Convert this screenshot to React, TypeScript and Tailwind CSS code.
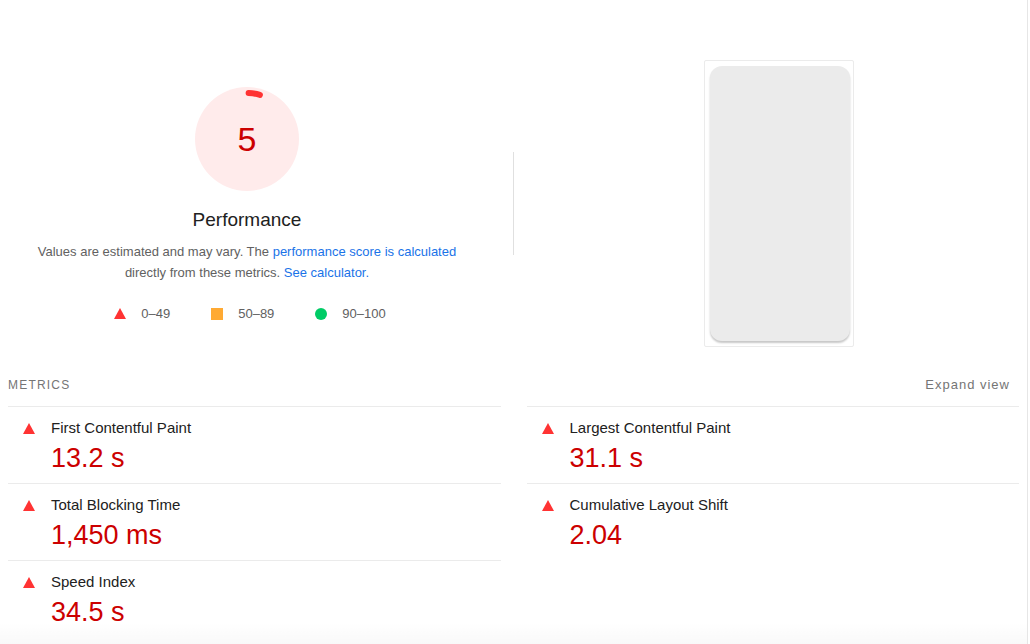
import React from "react";

const metrics = [
  [
    { title: "First Contentful Paint", value: "13.2 s" },
    { title: "Total Blocking Time", value: "1,450 ms" },
    { title: "Speed Index", value: "34.5 s" },
  ],
  [
    { title: "Largest Contentful Paint", value: "31.1 s" },
    { title: "Cumulative Layout Shift", value: "2.04" },
  ],
];

const FailIcon = ({ className = "" }: { className?: string }) => (
  <svg width="12" height="11" viewBox="0 0 12 11" className={className}>
    <polygon points="6,0 12,11 0,11" fill="#ff3333" />
  </svg>
);

const Gauge = () => (
  <div className="relative w-[104px] h-[104px]">
    <svg width="104" height="104" viewBox="0 0 104 104" className="absolute inset-0">
      <circle cx="52" cy="52" r="52" fill="#ffebeb" />
      <circle
        cx="52"
        cy="52"
        r="46"
        fill="none"
        stroke="#ff3333"
        strokeWidth="6"
        strokeLinecap="round"
        strokeDasharray="11.5 400"
        transform="rotate(-88 52 52)"
      />
    </svg>
    <div className="absolute inset-0 flex items-center justify-center text-[34px] text-[#cc0000] leading-none pt-[1px]">
      5
    </div>
  </div>
);

const MetricRow = ({ title, value }: { title: string; value: string }) => (
  <div className="border-t border-[#ebebeb] pt-[10px] pb-[9px] pl-[15px] flex">
    <div className="h-[22px] flex items-center">
      <FailIcon />
    </div>
    <div className="ml-[16px]">
      <div className="text-[15px] leading-[22px] text-[#212121]">{title}</div>
      <div className="mt-[3px] text-[27px] leading-[32px] text-[#cc0000]">{value}</div>
    </div>
  </div>
);

export default function App() {
  return (
    <div className="relative w-[1028px] h-[644px] overflow-hidden border-r border-[#e6e6e6] bg-white font-['Liberation_Sans',Arial,sans-serif]">
      <div className="grid grid-cols-[1fr_1px_1fr] gap-x-[19px] items-center pt-[60px]">
        <div className="flex flex-col items-center mt-[3px]">
          <Gauge />
          <div className="mt-[17px] text-[19px] leading-[24px] text-[#212121]">Performance</div>
          <p className="mt-[9px] text-[13px] leading-[21px] text-[#616161] text-center">
            Values are estimated and may vary. The{" "}
            <span className="text-[#1a73e8]">performance score is calculated</span>
            <br />
            directly from these metrics. <span className="text-[#1a73e8]">See calculator.</span>
          </p>
          <div className="mt-[21px] flex items-center text-[13px] leading-[20px] text-[#616161] ml-[6px]">
            <FailIcon />
            <span className="ml-[15px]">0–49</span>
            <span className="ml-[41px] w-[12px] h-[12px] bg-[#ffaa33]" />
            <span className="ml-[15px]">50–89</span>
            <span className="ml-[41px] w-[12px] h-[12px] rounded-full bg-[#00cc66]" />
            <span className="ml-[15px]">90–100</span>
          </div>
        </div>
        <div className="h-[103px] bg-[#e0e0e0]" />
        <div className="flex">
          <div className="ml-[171px] w-[150px] border border-[#ebebeb] rounded-[2px] pt-[5px] pl-[5px] pr-[3px] pb-[5px]">
            <div className="h-[275px] rounded-[12px] bg-[#ebebeb] shadow-[0_2px_2px_rgba(0,0,0,0.22)]" />
          </div>
        </div>
      </div>

      <div className="px-[8px] mt-[30px]">
        <div className="flex justify-between items-center pb-[13px] text-[12px] leading-[16px] tracking-[1.2px] text-[#757575]">
          <span>METRICS</span>
          <span className="mr-[9px] tracking-[1px] text-[13px]">Expand view</span>
        </div>
        <div className="grid grid-cols-2 gap-x-[26px]">
          {metrics.map((col, i) => (
            <div key={i}>
              {col.map((m) => (
                <MetricRow key={m.title} title={m.title} value={m.value} />
              ))}
            </div>
          ))}
        </div>
      </div>

      <div className="absolute left-0 right-0 bottom-0 h-[22px] bg-gradient-to-b from-transparent to-[rgba(0,0,0,0.025)] pointer-events-none" />
    </div>
  );
}
